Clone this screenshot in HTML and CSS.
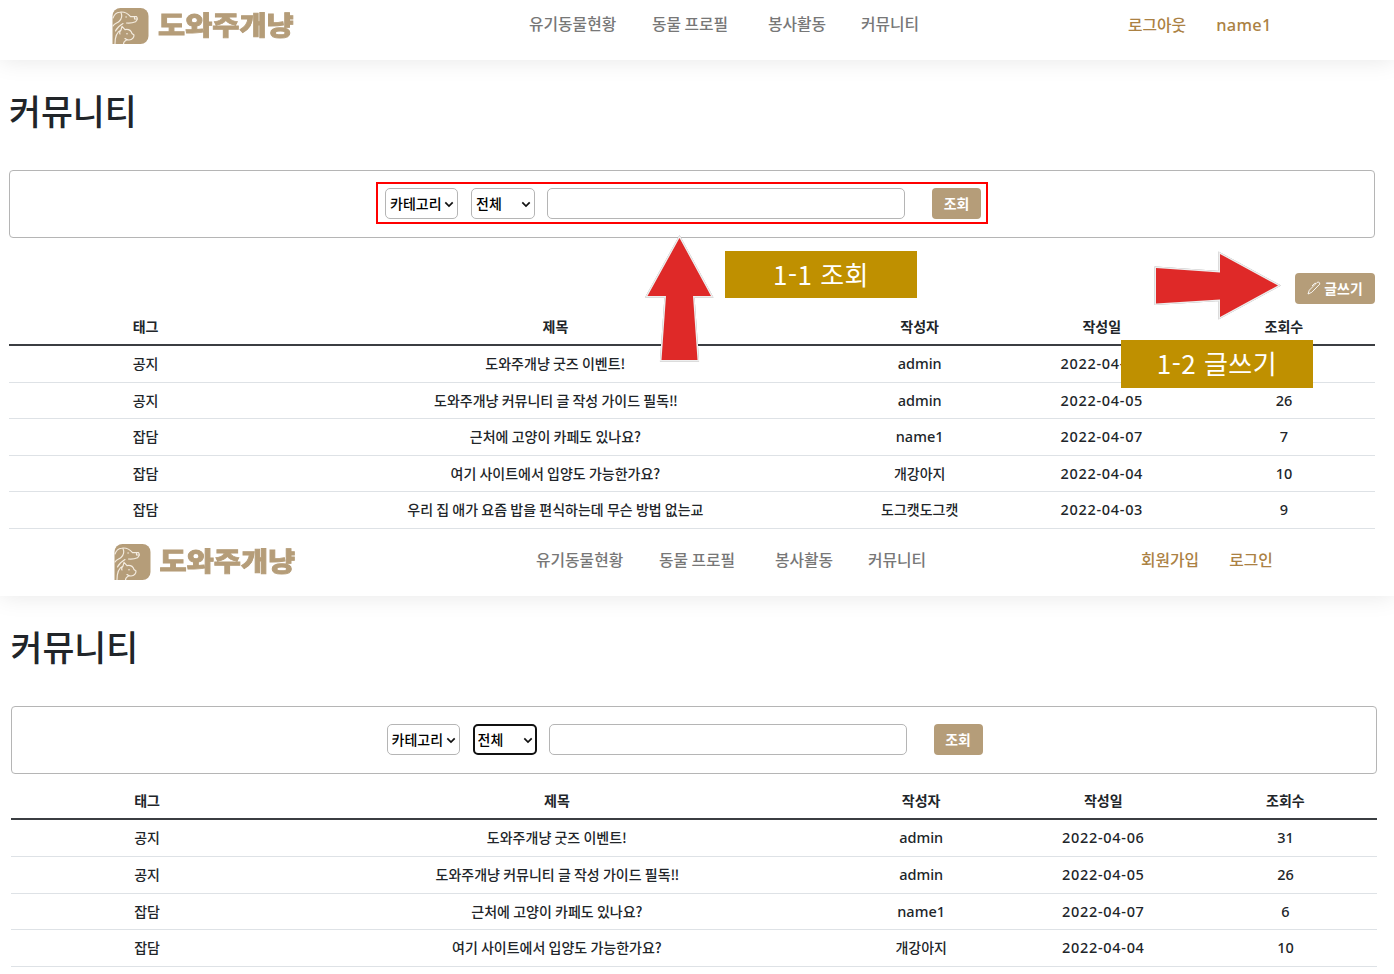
FILE: index.html
```html
<!DOCTYPE html>
<html lang="ko">
<head>
<meta charset="utf-8">
<title>도와주개냥 - 커뮤니티</title>
<link rel="stylesheet" href="styles.css">
</head>
<body>
<svg class="defs" width="0" height="0" aria-hidden="true">
  <symbol id="logo" viewBox="0 0 36 36">
    <path d="M8 0H28a8 8 0 0 1 8 8V28a8 8 0 0 1-8 8H0V8a8 8 0 0 1 8-8z" fill="#b59d79"/>
    <g fill="none" stroke="#f4ece0" stroke-width="1.15" stroke-linecap="round" stroke-linejoin="round">
      <path d="M.5 10C1.500 7 3.500 4.500 7 4.200C12 3.400 15 5 18 8.600L24 8.600Q26 11 23 13.700Q19 15.500 14 15"/>
      <path d="M8.500 4.500C10 8 9.300 11 6.500 13.500C4.500 15.300 2 15 .5 18M22 8.800v2.200h2.500M10.500 15.500C7 17.500 4.500 20 3 23"/>
      <path d="M2.500 36C2.500 28 4 24 8.500 22L9.500 18.300L12.500 21.600C16 21 18.500 22.500 19.500 25.500L21.500 27C21.500 30 20 31.500 16.500 32C14.500 32 13.500 31.500 12.500 30.500M8.500 22C7 23.500 7 25 7.500 26M11 36C11 34 12 33 14 32"/>
    </g>
    <circle cx="13.600" cy="9" r=".8" fill="#f4ece0"/>
    <circle cx="14.500" cy="25.800" r=".8" fill="#f4ece0"/>
  </symbol>
  <symbol id="chevron" viewBox="0 0 10 7">
    <path d="M1.300 1.300L5 5L8.700 1.300" fill="none" stroke="#111" stroke-width="1.700"/>
  </symbol>
</svg>

<section class="screen screen-member">
  <header class="topbar">
    <a class="brand"><svg class="brand-mark"><use href="#logo"/></svg><span class="brand-name">도와주개냥</span></a>
    <nav class="menu"><a>유기동물현황</a><a>동물 프로필</a><a>봉사활동</a><a>커뮤니티</a></nav>
    <div class="account"><a>로그아웃</a><a class="latin">name1</a></div>
  </header>
  <main class="content">
    <h1>커뮤니티</h1>
    <form class="search">
      <label class="pick pick-category"><select><option>카테고리</option></select><svg><use href="#chevron"/></svg></label>
      <label class="pick pick-scope"><select><option>전체</option></select><svg><use href="#chevron"/></svg></label>
      <input class="keyword" type="text">
      <button class="btn" type="button">조회</button>
    </form>
    <div class="actions">
      <button class="btn btn-write" type="button"><svg viewBox="0 0 14 14"><path d="M1 13L2.300 9.200L9.800 1.700C11 .6 13.300 1 12.700 3.200L4.800 11.300ZM9 2.300L7.500 2.400L5 5" fill="none" stroke="#fff" stroke-width=".9"/></svg>글쓰기</button>
    </div>
    <table class="board">
      <thead><tr><th>태그</th><th>제목</th><th>작성자</th><th>작성일</th><th>조회수</th></tr></thead>
      <tbody>
        <tr><td>공지</td><td>도와주개냥 굿즈 이벤트!</td><td class="latin">admin</td><td class="latin date">2022-04-06</td><td class="latin">31</td></tr>
        <tr><td>공지</td><td>도와주개냥 커뮤니티 글 작성 가이드 필독<span class="tight">!!</span></td><td class="latin">admin</td><td class="latin date">2022-04-05</td><td class="latin">26</td></tr>
        <tr><td>잡담</td><td>근처에 고양이 카페도 있나요?</td><td class="latin">name1</td><td class="latin date">2022-04-07</td><td class="latin">7</td></tr>
        <tr><td>잡담</td><td>여기 사이트에서 입양도 가능한가요?</td><td>개강아지</td><td class="latin date">2022-04-04</td><td class="latin">10</td></tr>
        <tr><td>잡담</td><td>우리 집 애가 요즘 밥을 편식하는데 무슨 방법 없는교</td><td>도그캣도그캣</td><td class="latin date">2022-04-03</td><td class="latin">9</td></tr>
      </tbody>
    </table>
  </main>
  <div class="mark-frame"></div>
  <svg class="arrow arrow-up" viewBox="0 0 70 128"><path d="M34.500 3L66 61H48L52.500 125H16.500L21 61H2.500Z"/></svg>
  <svg class="arrow arrow-right" viewBox="0 0 128 70"><path d="M3 17L67 21.500V3L125 34.500L67 66V48.500L3 52.500Z"/></svg>
  <div class="note note-search">1-1 조회</div>
  <div class="note note-write">1-2 글쓰기</div>
</section>

<section class="screen screen-guest">
  <header class="topbar">
    <a class="brand"><svg class="brand-mark"><use href="#logo"/></svg><span class="brand-name">도와주개냥</span></a>
    <nav class="menu"><a>유기동물현황</a><a>동물 프로필</a><a>봉사활동</a><a>커뮤니티</a></nav>
    <div class="account"><a>회원가입</a><a>로그인</a></div>
  </header>
  <main class="content">
    <h1>커뮤니티</h1>
    <form class="search">
      <label class="pick pick-category"><select><option>카테고리</option></select><svg><use href="#chevron"/></svg></label>
      <label class="pick pick-scope is-focused"><select><option>전체</option></select><svg><use href="#chevron"/></svg></label>
      <input class="keyword" type="text">
      <button class="btn" type="button">조회</button>
    </form>
    <table class="board">
      <thead><tr><th>태그</th><th>제목</th><th>작성자</th><th>작성일</th><th>조회수</th></tr></thead>
      <tbody>
        <tr><td>공지</td><td>도와주개냥 굿즈 이벤트!</td><td class="latin">admin</td><td class="latin date">2022-04-06</td><td class="latin">31</td></tr>
        <tr><td>공지</td><td>도와주개냥 커뮤니티 글 작성 가이드 필독<span class="tight">!!</span></td><td class="latin">admin</td><td class="latin date">2022-04-05</td><td class="latin">26</td></tr>
        <tr><td>잡담</td><td>근처에 고양이 카페도 있나요?</td><td class="latin">name1</td><td class="latin date">2022-04-07</td><td class="latin">6</td></tr>
        <tr><td>잡담</td><td>여기 사이트에서 입양도 가능한가요?</td><td>개강아지</td><td class="latin date">2022-04-04</td><td class="latin">10</td></tr>
      </tbody>
    </table>
  </main>
</section>
</body>
</html>
```
FILE: styles.css
```css
* { box-sizing: border-box; }

body {
  margin: 0;
  height: 974px;
  overflow: hidden;
  background: #fff;
  color: #212529;
  font: 500 14px/1.5 "Noto Sans CJK KR", sans-serif;
}

.defs { position: absolute; }

.latin {
  font-family: "Noto Sans", "Noto Sans CJK KR", sans-serif;
  font-size: 14.5px;
}
.date { letter-spacing: .7px; }
.tight { letter-spacing: -1px; }

.screen {
  position: relative;
  width: 1394px;
  overflow: hidden;
}
.screen-member { height: 536px; }
.screen-guest { height: 438px; }

/* Top bar */
.topbar {
  display: flex;
  align-items: center;
  height: 60px;
  padding: 0 0 11px 112px;
  box-shadow: 0 0 24px rgba(0, 0, 0, .1);
  white-space: nowrap;
}
.screen-guest .topbar { padding-left: 113.5px; }

.brand {
  display: flex;
  align-items: center;
  gap: 9px;
  width: 417px;
}
.brand-mark {
  width: 37px;
  height: 36px;
  margin-top: 2px;
}
.brand-name {
  height: 40px;
  color: #b59d79;
  font-size: 29.5px;
  font-weight: 900;
  line-height: 37px;
  -webkit-text-stroke: 1px #b59d79;
  transform: scaleY(.87);
}
.screen-guest .brand { width: 422.5px; }

.menu {
  display: flex;
  width: 599px;
  color: #777;
  font-size: 15.8px;
}
.menu a { margin-top: -1px; }
.menu a:nth-child(1) { width: 123px; }
.menu a:nth-child(2) { width: 116px; word-spacing: -1px; }
.menu a:nth-child(3) { width: 93px; }
.screen-guest .menu { width: 605px; }

.account {
  display: flex;
  gap: 30px;
  margin-top: -1px;
  color: #ab8143;
  font-size: 15.8px;
}
.screen-member .account { margin-top: 1px; }
.account .latin {
  font-size: 16.4px;
  letter-spacing: .3px;
}

/* Page body */
.content { padding: 26px 0 0 9px; width: 1375px; }
.screen-guest .content { padding-left: 10.5px; width: 1376.5px; }

h1 {
  margin: 0;
  height: 84px;
  font-size: 34.7px;
  font-weight: 500;
  line-height: 48px;
}

.search {
  display: flex;
  height: 68px;
  padding: 17px 0 0 375px;
  border: 1px solid #b5b5b5;
  border-radius: 4px;
}

.pick {
  position: relative;
  height: 31px;
  margin-right: 13px;
}
.pick-category { width: 73px; }
.pick-scope { width: 64px; }
.pick select {
  appearance: none;
  width: 100%;
  height: 100%;
  padding: 0 0 0 4px;
  border: 1px solid #b5b5b5;
  border-radius: 5px;
  background: #fff;
  color: #000;
  font: inherit;
  font-size: 14px;
}
.pick svg {
  position: absolute;
  right: 4px;
  top: 12.5px;
  width: 10px;
  height: 7px;
}
.is-focused select { border: 2px solid #111; padding-left: 3px; }

.keyword {
  width: 358px;
  height: 31px;
  margin: 0 27px 0 -1px;
  border: 1px solid #b5b5b5;
  border-radius: 5px;
}

.btn {
  width: 49px;
  height: 31px;
  padding: 0 0 2px;
  border: 0;
  border-radius: 4px;
  background: #b59d79;
  color: #fff;
  font: 700 13.9px/28px "Noto Sans CJK KR", sans-serif;
}

.actions {
  display: flex;
  justify-content: flex-end;
  height: 70.6px;
  padding-top: 35px;
}
.btn-write {
  display: flex;
  align-items: center;
  justify-content: center;
  gap: 3px;
  width: 80px;
}
.btn-write svg { width: 14px; height: 14px; }

/* Post list */
.board { display: block; }
.screen-guest .board { padding-top: 9px; }
.board thead, .board tbody { display: block; }
.board tr {
  display: grid;
  grid-template-columns: 3fr 6fr 2fr 2fr 2fr;
  height: 36.6px;
  border-bottom: 1px solid #dee2e6;
  text-align: center;
  line-height: 34px;
}
.board thead tr { height: 37.4px; border-bottom: 2px solid #3b3e42; }
.board th, .board td { padding: 0; white-space: nowrap; word-spacing: -.7px; }
.board td.latin { line-height: 35.4px; }
.board th { font-size: 14px; font-weight: 700; }

/* Annotations over the screen */
.mark-frame {
  position: absolute;
  left: 376px;
  top: 182px;
  width: 612px;
  height: 42px;
  border: 2px solid #f00;
}
.arrow { position: absolute; overflow: visible; }
.arrow path {
  fill: #df2928;
  stroke: #eee;
  stroke-width: 3px;
  paint-order: stroke;
  filter: drop-shadow(0 0 .7px #999);
}
.arrow-up { left: 645px; top: 235px; width: 70px; height: 128px; }
.arrow-right { left: 1153px; top: 251px; width: 128px; height: 70px; }
.note {
  position: absolute;
  width: 192px;
  background: #bf9000;
  color: #fff;
  font-size: 26px;
  font-weight: 400;
  letter-spacing: .5px;
  text-align: center;
}
.note-search { left: 725px; top: 251px; height: 47px; line-height: 46px; }
.note-write { left: 1121px; top: 340px; height: 48px; line-height: 46px; }
```
